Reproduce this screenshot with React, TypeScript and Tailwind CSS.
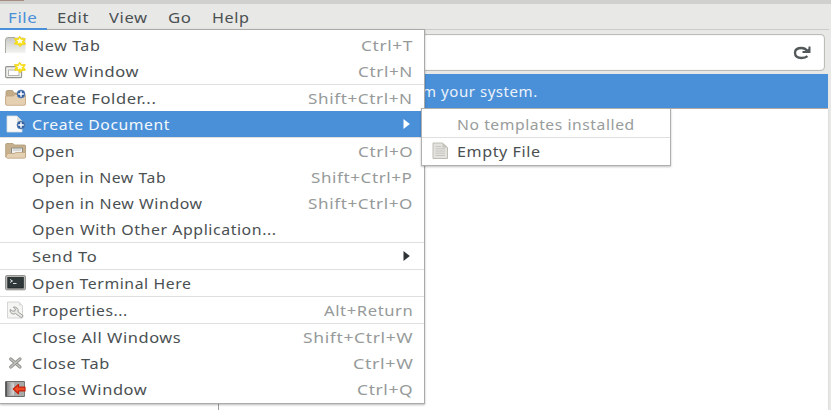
import { useLayoutEffect, useRef, useState } from "react";
import type { ReactNode } from "react";

type LabelProps = { text: string; width: number; className?: string };

// Stretches a label horizontally so it fills the given width.
function Label({ text, width, className = "" }: LabelProps) {
  const ref = useRef<HTMLSpanElement>(null);
  const [scale, setScale] = useState(1);
  useLayoutEffect(() => {
    if (ref.current) setScale(width / ref.current.offsetWidth);
  }, [text, width]);
  return (
    <span className={`flex ${className}`} style={{ width }}>
      <span
        ref={ref}
        className="shrink-0 origin-left tracking-[0.5px] whitespace-pre"
        style={{ transform: `scaleX(${scale})` }}
      >
        {text}
      </span>
    </span>
  );
}

function Star() {
  return (
    <g>
      <path
        d="M14.7.2l1.8 2.600 3.800-.2-1.600 3 2 2.500-3.600.5-2.200 2-1.800-2.300-3.700-.2 1.700-2.600-1.700-2.900 3.600.1z"
        fill="#f7e21b"
        stroke="#f3d51c"
        strokeWidth=".9"
      />
      <path d="M14.700 2l1.100 1.800 2.400.2-1.600 1.500.5 2-2.300-1-2.100 1 .5-2-1.700-1.400 2.200-.2z" fill="#fffef0" />
    </g>
  );
}

function PlusBadge({ y }: { y: number }) {
  return (
    <g transform={`translate(16 ${y})`}>
      <circle r="4" fill="#2f5f9f" stroke="#6285b4" strokeWidth=".7" />
      <path d="M0-2.800v5.600M-2.800 0h5.600" stroke="#fff" strokeWidth="1.500" />
    </g>
  );
}

function Icon({ children }: { children: ReactNode }) {
  return (
    <svg width="22" height="18" viewBox="0 0 22 18" className="block shrink-0 overflow-visible">
      {children}
    </svg>
  );
}

const newTab = (
  <Icon>
    <defs>
      <linearGradient id="tab" x2="0" y2="1">
        <stop stopColor="#c7c8c3" />
        <stop offset="1" stopColor="#f4f4f2" />
      </linearGradient>
    </defs>
    <path d="M.5 17V4Q.5 1.500 3 1.500h15q2.500 0 2.500 2.500v13z" fill="url(#tab)" />
    <path d="M.5 17V4Q.5 1.500 3 1.500h7" fill="none" stroke="#aaa9a3" />
    <Star />
  </Icon>
);
const newWindow = (
  <Icon>
    <rect x=".6" y="4.600" width="16" height="11" rx="1" fill="#eeeeeb" stroke="#92948e" strokeWidth="1.100" />
    <rect x="3.500" y="8" width="10.500" height="5.500" fill="#fff" stroke="#b4b5b0" />
    <Star />
  </Icon>
);
const folder = (
  <Icon>
    <path d="M1 15V3q0-1.500 1.500-1.500h5L9 4h10v11z" fill="#c6ad89" stroke="#ac926e" strokeWidth=".8" />
    <path d="M.6 8q0-1 1-1H8l2-1.500h9.500q1 0 1 1V15q0 1.300-1.300 1.300H2Q.6 16.300.6 15z" fill="#e5d0b2" stroke="#bea27d" strokeWidth=".8" />
    <PlusBadge y={5} />
  </Icon>
);
const documentIcon = (
  <Icon>
    <path d="M2 1h10l5 5v11H2z" fill="#fafafa" stroke="#d8dcde" strokeWidth=".8" />
    <path d="M12 1v5h5z" fill="#dcdedc" />
    <path d="M12 6h5v4h-5z" fill="#e6e6e3" />
    <PlusBadge y={10} />
  </Icon>
);
const openFolder = (
  <Icon>
    <path d="M.7 15V2.500q0-1 1-1H8L9 3h10.500q1 0 1 1v11z" fill="#c6b08e" stroke="#ad9572" strokeWidth=".8" />
    <path d="M6.500 6h11v6h-11z" fill="#f1f1ef" stroke="#888a85" />
    <path d="M8 8h8" stroke="#bbb" />
    <path d="M2.500 11.500H9l2-1h9.500V15q0 1.200-1.200 1.200H2.200L.8 15z" fill="#e4d0b3" stroke="#bfa47f" strokeWidth=".8" />
  </Icon>
);
const terminal = (
  <Icon>
    <rect x=".6" y="1.600" width="19.800" height="14.200" rx="1" fill="#bcbdb9" stroke="#8b8c89" />
    <rect x="2.800" y="3.500" width="15.500" height="10.500" fill="#30383a" stroke="#1e2425" strokeWidth=".8" />
    <path d="M5 5.500l2.500 1.500L5 8.500" fill="none" stroke="#dce0dc" strokeWidth="1" />
    <path d="M8 9.500h3.500" stroke="#dce0dc" />
  </Icon>
);
const properties = (
  <Icon>
    <path d="M2.500 1h11.500l3.500 3.500V17h-15z" fill="#f5f5f4" stroke="#cccdca" strokeWidth=".8" />
    <path d="M14 1v3.500h3.500z" fill="#ddd" />
    <path
      d="M8.300 6.200L10.500 8 9.700 10.200 7.500 10 5.200 8.500Q4.500 11.500 7 12.700q2 .8 3.500-.2l5.800 4.200 2-1.800-5.200-4Q13.600 8.500 12 7 10.500 5.600 8.300 6.200z"
      fill="#e9eae8"
      stroke="#92948f"
      strokeWidth=".9"
    />
  </Icon>
);
const closeX = (
  <Icon>
    <path d="M5.700 5l9.300 8M15 5l-9.300 8" stroke="#90928d" strokeWidth="3.200" strokeLinecap="round" />
    <path d="M5.700 5l9.300 8M15 5l-9.300 8" stroke="#c1c2be" strokeWidth="1.400" strokeLinecap="round" />
  </Icon>
);
const exit = (
  <Icon>
    <defs>
      <linearGradient id="door">
        <stop stopColor="#777" />
        <stop offset="1" stopColor="#ddd" />
      </linearGradient>
    </defs>
    <path d="M.6 1.500h18.800v15H.6z" fill="#b5b6b4" stroke="#6c6e6b" />
    <path d="M1 2l8 1.500v11L1 16.500z" fill="url(#door)" />
    <path d="M1.200 2v14.500" stroke="#555" strokeWidth="1.500" />
    <path d="M9 2h10v14H9z" fill="#a8aaa8" />
    <path d="M8.300 9l5.200-4.500v2.700H20v3.700h-6.500v2.800z" fill="#ef4b25" stroke="#c4210c" strokeWidth="1.200" strokeLinejoin="round" />
  </Icon>
);
const fileIcon = (
  <Icon>
    <path d="M1 1h9.500l5 4.500V16.500H1z" fill="#e3e2dc" stroke="#bdbcb5" strokeLinejoin="round" />
    <path d="M10.500 1v4.500h5z" fill="#c3c2bb" />
    <path d="M3.500 4.500H9M3.500 6.800h9.500M3.500 9h9.500M3.500 11.200h9.500M3.500 13.500h9.500" stroke="#c2c3bf" strokeWidth=".9" />
  </Icon>
);

type Item = {
  text: string;
  width: number;
  icon?: ReactNode;
  keys?: string;
  keysWidth?: number;
  submenu?: boolean;
  active?: boolean;
};

const groups: Item[][] = [
  [
    { text: "New Tab", width: 69, icon: newTab, keys: "Ctrl+T", keysWidth: 52 },
    { text: "New Window", width: 107, icon: newWindow, keys: "Ctrl+N", keysWidth: 55 },
  ],
  [
    { text: "Create Folder...", width: 124, icon: folder, keys: "Shift+Ctrl+N", keysWidth: 105 },
    { text: "Create Document", width: 138, icon: documentIcon, submenu: true, active: true },
  ],
  [
    { text: "Open", width: 43, icon: openFolder, keys: "Ctrl+O", keysWidth: 55 },
    { text: "Open in New Tab", width: 134, keys: "Shift+Ctrl+P", keysWidth: 102 },
    { text: "Open in New Window", width: 171, keys: "Shift+Ctrl+O", keysWidth: 105 },
    { text: "Open With Other Application...", width: 245 },
  ],
  [{ text: "Send To", width: 65, submenu: true }],
  [{ text: "Open Terminal Here", width: 159, icon: terminal }],
  [{ text: "Properties...", width: 96, icon: properties, keys: "Alt+Return", keysWidth: 89 }],
  [
    { text: "Close All Windows", width: 149, keys: "Shift+Ctrl+W", keysWidth: 110 },
    { text: "Close Tab", width: 78, icon: closeX, keys: "Ctrl+W", keysWidth: 60 },
    { text: "Close Window", width: 115, icon: exit, keys: "Ctrl+Q", keysWidth: 56 },
  ],
];

function MenuRow({ item }: { item: Item }) {
  return (
    <li
      className={`flex h-[26px] items-center pr-[11px] pl-[5px] ${
        item.active ? "bg-[#4a90d9] text-[#f4f8fc]" : "text-[#4a5052]"
      }`}
    >
      <span className="w-[27px]">{item.icon}</span>
      <Label text={item.text} width={item.width} className="pt-0.5" />
      <span className="grow" />
      {item.keys && <Label text={item.keys} width={item.keysWidth ?? 0} className="pt-0.5 text-[#969a9a]" />}
      {item.submenu && (
        <svg width="7" height="10" viewBox="0 0 7 10" className={`mr-[3px] ${item.active ? "text-white" : "text-[#2e3436]"}`}>
          <path d="M.5 0L6.800 5 .5 10z" fill="currentColor" />
        </svg>
      )}
    </li>
  );
}

const menuBar = [
  { text: "Edit", width: 32 },
  { text: "View", width: 39 },
  { text: "Go", width: 24 },
  { text: "Help", width: 38 },
];

export default function App() {
  return (
    <div className="relative flex h-[410px] w-[832px] flex-col overflow-hidden border-r border-white bg-[#e8e8e6] font-['Noto_Sans','Open_Sans',sans-serif] text-[14px] leading-5 text-[#4a5052]">
      <div className="h-1 shrink-0 bg-[#d0d0ce]">
        <div className="h-px w-6 bg-[#a58e80]" />
      </div>
      <nav className="mr-[2px] flex h-[26px] shrink-0 items-stretch gap-5 border-b border-[#cbcbc8]">
        <span className="flex w-[37px] items-center pt-0.5 pl-2 text-[#4a90d9]">
          <Label text="File" width={29} />
        </span>
        {menuBar.map((entry) => (
          <span key={entry.text} className="flex items-center pt-0.5">
            <Label text={entry.text} width={entry.width} />
          </span>
        ))}
      </nav>
      <div className="mt-1 mr-[6px] mb-[3px] flex h-[37px] shrink-0 items-center justify-end rounded-[4px] border border-[#bbbcb8] bg-white pr-[13px] shadow-[inset_0_0_1px_#bbb]">
        <svg width="18" height="14" viewBox="0 0 18 14" className="text-[#53595b]">
          <path d="M14.500 10.200Q12.500 12 8.500 12 2 12 2 6.800 2 2 8.500 2q3.500 0 6 3" fill="none" stroke="currentColor" strokeWidth="2.300" />
          <path d="M17.500.5v6.500H9.500V5h3.500l2.500-2.500V.5z" fill="currentColor" />
        </svg>
      </div>
      <div className="mr-[3px] flex h-[35px] shrink-0 items-center border-b border-[#b5aaa1] bg-[#4a90d9] pl-[422px] text-[#eaf2fa]">
        <Label text="m your system." width={116} className="pt-0.5" />
      </div>
      <main className="mr-[2px] flex grow border-r border-[#dededc] bg-white">
        <div className="w-[219px] border-r border-[#9fa09e]" />
      </main>

      <ul className="absolute top-[29px] left-0 w-[425px] border-t border-r border-b border-[#aaaba9] bg-white pt-0.5 pb-[1px] shadow-[0_1px_2px_#00000045]">
        {groups.map((group, i) => (
          <li key={i} className={i > 0 ? "border-t border-[#dedfde]" : ""}>
            <ul>
              {group.map((item) => (
                <MenuRow key={item.text} item={item} />
              ))}
            </ul>
          </li>
        ))}
      </ul>
      <div className="absolute top-[28px] left-0 h-0.5 w-[47px] bg-[#4a90d9]" />

      <ul className="absolute top-[108px] left-[421px] w-[250px] border border-[#b0b0ae] bg-white pt-0.5 pb-px shadow-[0_1px_2px_#00000040]">
        <li className="flex h-[26px] items-center pl-[35px] text-[#989c9b]">
          <Label text="No templates installed" width={178} className="pt-0.5" />
        </li>
        <li className="flex h-[27px] items-center border-t border-[#dedfde] pl-[10px]">
          <span className="w-[25px]">{fileIcon}</span>
          <Label text="Empty File" width={84} className="pt-0.5" />
        </li>
      </ul>
    </div>
  );
}
